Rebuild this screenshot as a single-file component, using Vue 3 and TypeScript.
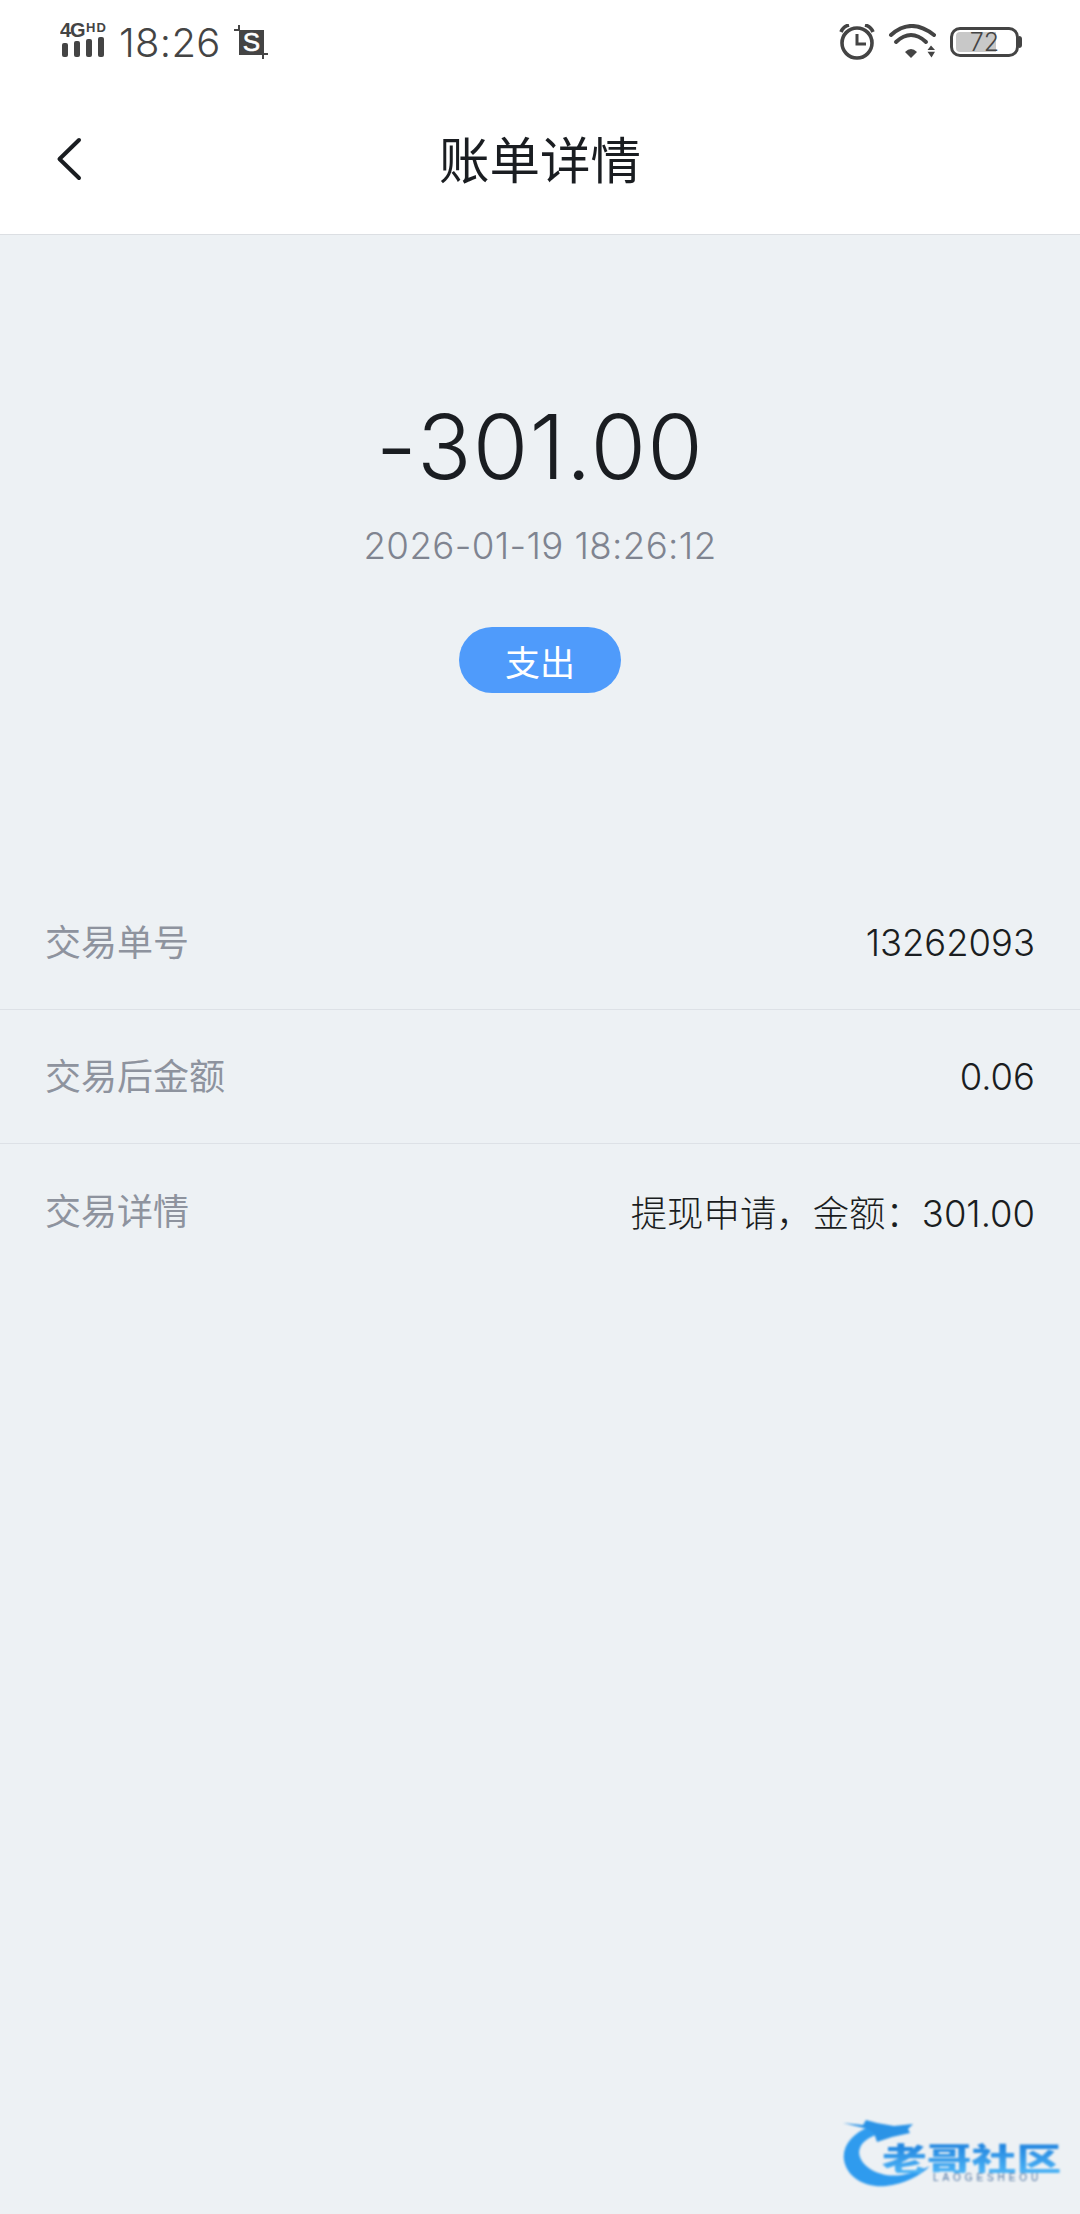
<script setup lang="ts">
interface DetailRow {
  label: string
  value: string
}

const rows: DetailRow[] = [
  { label: "交易单号", value: "13262093" },
  { label: "交易后金额", value: "0.06" },
  { label: "交易详情", value: "提现申请，金额：301.00" }
]
</script>

<template>
  <div class="page">
    <div class="status-bar">
      <div class="status-left">
        <svg class="signal" width="52" height="48" viewBox="0 -4 52 48">
          <text x="0" y="14" class="net">4G</text>
          <text x="26" y="9" class="hd">HD</text>
          <rect x="2" y="20" width="6" height="14" rx="2" />
          <rect x="14" y="18" width="6" height="16" rx="2" />
          <rect x="26" y="16" width="6" height="18" rx="2" />
          <rect x="38" y="14" width="6" height="20" rx="2" />
        </svg>
        <span class="time">18:26</span>
        <svg class="shot" width="34" height="34" viewBox="0 0 34 34">
          <rect x="5" y="5" width="25" height="25" fill="#444" />
          <path d="M0 5h6M5 0v6M29 34v-6M28 29h6" stroke="#444" stroke-width="2" fill="none" />
          <text x="17.5" y="26" class="shot-s">S</text>
        </svg>
      </div>
      <div class="status-right">
        <svg width="36" height="36" viewBox="0 0 36 36">
          <circle cx="18" cy="19" r="15" fill="none" stroke="#444" stroke-width="3.6" />
          <path d="M18 10v10h9" fill="none" stroke="#444" stroke-width="3" />
          <path d="M2 8C3.500 4 6 2 10 1M34 8C32.500 4 30 2 26 1" fill="none" stroke="#444" stroke-width="3.6" />
        </svg>
        <svg width="48" height="36" viewBox="0 0 48 36">
          <path d="M3 11Q23 -7 46 11" fill="none" stroke="#444" stroke-width="4" stroke-linecap="round" />
          <path d="M8 18Q23 4 38 18" fill="none" stroke="#444" stroke-width="4" stroke-linecap="round" />
          <path d="M17 28Q23 22 29 28L23 34Z" fill="#444" />
          <path d="M43 21.500L39.500 26H47ZM39.500 27.700H47L43.500 33.500Z" fill="#444" />
        </svg>
        <div class="battery">
          <div class="battery-body">
            <div class="battery-fill"></div>
            <span class="battery-num">72</span>
          </div>
          <div class="battery-cap"></div>
        </div>
      </div>
    </div>

    <div class="nav-bar">
      <svg class="back" width="28" height="44" viewBox="0 0 28 44">
        <path d="M24 3L4.500 22L24 41" fill="none" stroke="#1a1d21" stroke-width="4" stroke-linecap="round" stroke-linejoin="round" />
      </svg>
      <div class="title">账单详情</div>
    </div>

    <div class="summary">
      <div class="amount">-301.00</div>
      <div class="date">2026-01-19 18:26:12</div>
      <div class="tag">支出</div>
    </div>

    <div class="detail-list">
      <div v-for="row in rows" :key="row.label" class="detail-row">
        <span class="label">{{ row.label }}</span>
        <span class="value">{{ row.value }}</span>
      </div>
    </div>

    <div class="watermark">
      <svg class="dragon" width="120" height="70" viewBox="0 0 120 70">
        <path d="M28 6C10 14 0 26 2 40C5 58 24 68 44 66C62 64 78 56 88 46C72 54 52 58 40 54C24 50 14 38 18 28C20 22 26 18 36 14Z" fill="#2f9bee" />
        <path d="M1 3L21 5L24 0L35 3L52 6L71 4L66 9L68 13L50 17L35 22L32 13L26 9Z" fill="#2b93e6" />
      </svg>
      <div class="wm-name">老哥社区</div>
      <div class="wm-sub">LAOGESHEOU</div>
    </div>
  </div>
</template>

<style scoped>
.page {
  position: relative;
  height: 2214px;
  overflow: hidden;
  background: #edf1f4;
  font-family: Inter, "Noto Sans CJK SC", sans-serif;
}
.status-bar {
  height: 84px;
  background: #fff;
  padding: 0 58px 0 60px;
  display: flex;
  align-items: center;
  justify-content: space-between;
  color: #444;
}
.status-left {
  display: flex;
  align-items: center;
}
.signal {
  fill: #444;
  margin-top: 2px;
}
.net {
  font: 700 20px "Liberation Sans Narrow", "Liberation Sans", sans-serif;
  letter-spacing: -1px;
}
.hd {
  font: 700 13px "Liberation Sans", sans-serif;
  letter-spacing: 1px;
}
.time {
  margin-left: 7px;
  font-size: 40px;
  font-weight: 300;
  letter-spacing: 0.3px;
}
.shot {
  margin-left: 13px;
}
.shot-s {
  font: 400 26px "Liberation Sans", sans-serif;
  fill: #fff;
  stroke: #fff;
  stroke-width: 0.6px;
  text-anchor: middle;
}
.status-right {
  display: flex;
  align-items: center;
  gap: 13px;
}
.battery {
  display: flex;
  align-items: center;
  margin-left: 1px;
}
.battery-body {
  position: relative;
  width: 69px;
  height: 30px;
  box-sizing: border-box;
  border: 3px solid #444;
  border-radius: 10px;
  display: flex;
  align-items: center;
  justify-content: center;
}
.battery-fill {
  position: absolute;
  left: 3px;
  top: 2px;
  bottom: 2px;
  width: 40px;
  background: #c8c8c8;
  border-radius: 4px 0 0 4px;
}
.battery-num {
  position: relative;
  font-size: 25px;
  font-weight: 300;
  line-height: 1;
}
.battery-cap {
  width: 3px;
  height: 12px;
  background: #444;
  border-radius: 0 3px 3px 0;
}
.nav-bar {
  position: relative;
  height: 151px;
  background: #fff;
  border-bottom: 1px solid #dcdfe3;
  box-sizing: border-box;
  display: flex;
  align-items: center;
  justify-content: center;
}
.back {
  position: absolute;
  left: 55px;
  top: 53px;
}
.title {
  font-size: 50.500px;
  color: #1a1d21;
  margin-bottom: 5px;
}
.summary {
  display: flex;
  flex-direction: column;
  align-items: center;
  padding-top: 159px;
}
.amount {
  font-size: 90px;
  font-weight: 300;
  line-height: 106px;
  letter-spacing: 1.200px;
  color: #1a1d21;
}
.date {
  margin-top: 24px;
  font-size: 36.700px;
  font-weight: 300;
  line-height: 44px;
  letter-spacing: 0.370px;
  color: #7f8490;
}
.tag {
  margin-top: 59px;
  width: 162px;
  height: 66px;
  border-radius: 33px;
  background: #4f9bfb;
  color: #fff;
  font-size: 35px;
  display: flex;
  align-items: center;
  justify-content: center;
}
.detail-list {
  margin-top: 183px;
}
.detail-row {
  height: 134px;
  box-sizing: border-box;
  padding: 0 45px;
  display: flex;
  align-items: center;
  justify-content: space-between;
  font-size: 36px;
  border-bottom: 1px solid #dde1e6;
}
.detail-row:last-child {
  border-bottom: none;
}
.label {
  color: #8e939e;
  margin-bottom: 5px;
}
.value {
  color: #1a1d21;
  font-size: 36.400px;
  font-weight: 300;
}
.watermark {
  position: absolute;
  left: 842px;
  top: 2120px;
  width: 225px;
  height: 72px;
  filter: blur(0.8px);
}
.dragon {
  position: absolute;
  left: 0;
  top: 0;
}
.wm-name {
  position: absolute;
  left: 40px;
  top: 21px;
  font: 900 32px/32px "Noto Sans CJK SC", sans-serif;
  white-space: nowrap;
  color: #2a94ea;
  transform: scaleX(1.400);
  transform-origin: left center;
  background: linear-gradient(#1c7fdc, #4db4f6);
  -webkit-background-clip: text;
  background-clip: text;
  -webkit-text-fill-color: transparent;
}
.wm-sub {
  position: absolute;
  left: 91px;
  top: 54px;
  font: 400 10px/8px "Liberation Sans", sans-serif;
  letter-spacing: 3.900px;
  white-space: nowrap;
  color: #4d74a3;
}
</style>
